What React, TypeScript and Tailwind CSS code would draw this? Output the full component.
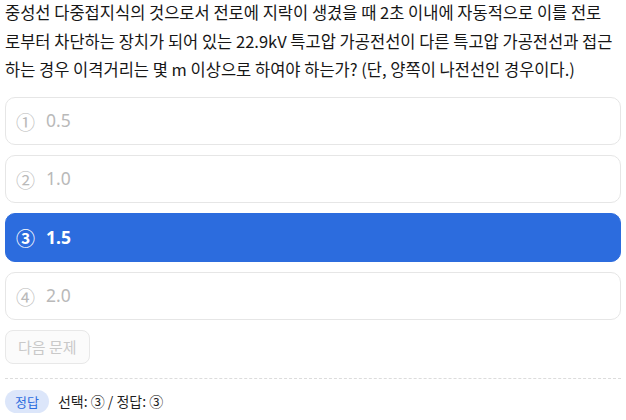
import React from "react";

const options = [
  { n: "①", v: "0.5" },
  { n: "②", v: "1.0" },
  { n: "③", v: "1.5" },
  { n: "④", v: "2.0" },
];

export default function App() {
  const selected = 2;
  return (
    <div className="w-[626px] h-[420px] overflow-hidden bg-white px-[5px] font-['Noto_Sans_CJK_KR',sans-serif]">
      <div className="-mt-[2px] text-[16.5px] leading-[28.5px] text-[#161616]">
        <div className="whitespace-nowrap">중성선 다중접지식의 것으로서 전로에 지락이 생겼을 때 2초 이내에 자동적으로 이를 전로</div>
        <div className="whitespace-nowrap">로부터 차단하는 장치가 되어 있는 22.9kV 특고압 가공전선이 다른 특고압 가공전선과 접근</div>
        <div className="whitespace-nowrap">하는 경우 이격거리는 몇 m 이상으로 하여야 하는가? (단, 양쪽이 나전선인 경우이다.)</div>
      </div>
      <div className="mt-[13.5px] flex flex-col gap-[10px]">
        {options.map((o, i) =>
          i === selected ? (
            <div
              key={i}
              className="flex h-[49px] items-center gap-[11px] rounded-[10px] border border-[#2c6cde] bg-[#2c6cde] px-[10px] text-white"
            >
              <span className="text-[19px] font-bold leading-none">{o.n}</span>
              <span className="font-['Noto_Sans',sans-serif] text-[17.5px] font-bold leading-none">{o.v}</span>
            </div>
          ) : (
            <div
              key={i}
              className="flex h-[48px] items-center gap-[11px] rounded-[10px] border border-[#e6e6e6] bg-white px-[10px] text-[#b9b9b9]"
            >
              <span className="text-[19px] leading-none">{o.n}</span>
              <span className="font-['Noto_Sans',sans-serif] text-[17.5px] leading-none">{o.v}</span>
            </div>
          )
        )}
      </div>
      <button className="mt-[10px] flex h-[34px] items-center rounded-[8px] border border-[#e8e8e8] bg-[#fbfbfb] px-[12px] text-[15px] text-[#c9c9c9]">
        다음 문제
      </button>
      <div className="mt-[14px] border-t border-dashed border-[#dcdcdc]" />
      <div className="mt-[11px] flex items-center gap-[9px]">
        <span className="flex h-[23px] items-center rounded-full bg-[#dce6fa] px-[10px] text-[13px] text-[#2c6cde]">
          정답
        </span>
        <span className="text-[14px] text-[#1f1f1f]">선택: ③ / 정답: ③</span>
      </div>
    </div>
  );
}
